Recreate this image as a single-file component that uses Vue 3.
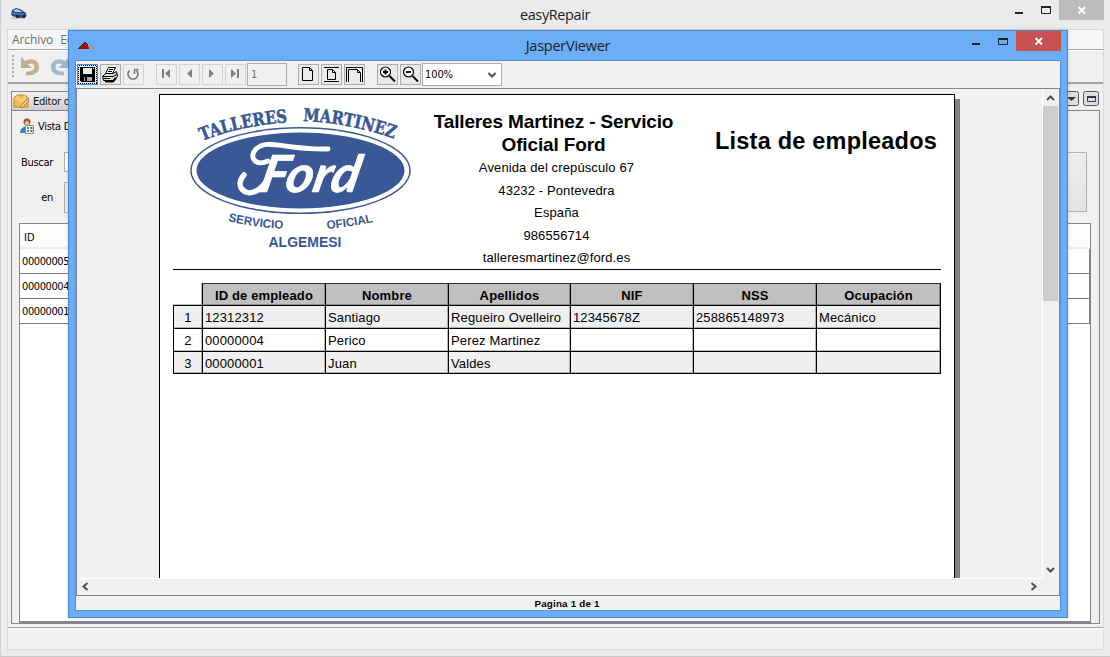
<script setup>
const columns = [
  { label: 'ID de empleado', key: 'id' },
  { label: 'Nombre', key: 'name' },
  { label: 'Apellidos', key: 'last' },
  { label: 'NIF', key: 'nif' },
  { label: 'NSS', key: 'nss' },
  { label: 'Ocupación', key: 'job' },
]
const employees = [
  { id: '12312312', name: 'Santiago', last: 'Regueiro Ovelleiro', nif: '12345678Z', nss: '258865148973', job: 'Mecánico' },
  { id: '00000004', name: 'Perico', last: 'Perez Martinez', nif: '', nss: '', job: '' },
  { id: '00000001', name: 'Juan', last: 'Valdes', nif: '', nss: '', job: '' },
]
const ids = ['00000005', '00000004', '00000001']
</script>

<template>
  <div class="desktop">
    <div class="main-title">
      <svg class="car" width="18" height="14" viewBox="0 0 18 14">
        <path d="M1 7 L2 3 L6 1 L10 2 L13 4 L16 6 L16.500 9 L14 11 L9 11 L2 9Z" fill="#284f8c" />
        <path d="M3 4 L6 2 L9.500 3 L12 5 L6 5Z" fill="#b4c8e2" />
        <path d="M2 6 L7 7 L14 7" stroke="#5f8cc8" fill="none" />
        <circle cx="7.500" cy="9.500" r="1.700" fill="#1c1c24" /><circle cx="14" cy="9.500" r="1.500" fill="#1c1c24" />
        <path d="M2 11 H15" stroke="#777" opacity=".6" />
      </svg>
      <span class="title-text">easyRepair</span>
      <svg class="win-controls" width="95" height="20" viewBox="0 0 95 20">
        <path d="M50 0H95V20H50Z" fill="#bcbcbc" />
        <path d="M6 13H14" stroke="#222" stroke-width="2" />
        <path d="M32.500 6.500H41.500V13.500H32.500Z" stroke="#222" fill="none" /><path d="M32 7H42" stroke="#222" stroke-width="2" />
        <path d="M69.500 7L76 13.500M76 7L69.500 13.500" stroke="#fff" stroke-width="1.800" />
      </svg>
    </div>
    <div class="main-frame">
      <div class="menu"><span>Archivo</span><span>Editar</span></div>
      <div class="main-tools">
        <i class="grip"></i>
        <svg width="60" height="24" viewBox="0 0 60 24">
          <path d="M3 3L7 7C13 3 21 6 21 13C21 19 16 22 8 21L8 17.500C13 18 16.500 16 16.500 13C16.500 9.500 13 8.500 10 10.500L14 14H3Z" fill="#c3ae94" />
          <path d="M51 3L47 7C41 3 33 6 33 13C33 19 38 22 46 21L46 17.500C41 18 37.500 16 37.500 13C37.500 9.500 41 8.500 44 10.500L40 14H51Z" fill="#a5b8c6" />
        </svg>
      </div>
      <div class="tab-row">
        <div class="tab">
          <svg width="17" height="15" viewBox="0 0 17 15">
            <path d="M1 4L4 1H12L15 4V13H1Z" fill="#f3ba52" stroke="#c98622" />
            <path d="M1 5H15M5 1L4 5L8 8L12 5L11 1" stroke="#fbe0a0" fill="none" />
            <path d="M7 13L14 5L16 7L9 14Z" fill="#f6d27b" stroke="#9a6424" stroke-width=".8" /><path d="M13 5L15 3L16.500 5L15 7Z" fill="#d98a94" />
          </svg>
          <span>Editor de empleados</span>
        </div>
        <div class="tab-buttons">
          <svg width="38" height="16" viewBox="0 0 38 16">
            <rect x="2.500" y=".5" width="15" height="14" rx="2" fill="#dedede" stroke="#50555d" />
            <path d="M6 6H15L10.500 10Z" fill="#303844" />
            <rect x="22.500" y=".5" width="15" height="14" rx="2" fill="#dedede" stroke="#50555d" />
            <path d="M26.500 5.500H34.500V10.500H26.500Z" fill="none" stroke="#303844" /><path d="M26 6H35" stroke="#303844" stroke-width="2" />
          </svg>
        </div>
      </div>
      <div class="panel">
        <div class="view-label">
          <svg width="15" height="17" viewBox="0 0 15 17">
            <circle cx="7" cy="4" r="3.500" fill="#8a5a2b" /><circle cx="7" cy="5.300" r="2.300" fill="#e9b98c" />
            <path d="M0 15C0 11 3 8.500 6 8.500L9 15Z" fill="#2f86c8" />
            <path d="M5.500 7.500H13.500V15.500H5.500Z" fill="#f7f7f7" stroke="#8292a2" />
            <path d="M7 10H9M7 13H9" stroke="#4d9c38" stroke-width="1.800" /><path d="M10.500 10H12.500M10.500 13H12.500" stroke="#4a6488" stroke-width="1.800" />
          </svg>
          <span>Vista Detalle</span>
        </div>
        <div class="search">
          <div class="line"><label>Buscar</label><i class="field"></i></div>
          <div class="line tall"><label>en</label><i class="combo"></i></div>
          <div class="big-button"></div>
        </div>
        <div class="id-table">
          <div class="id-head">ID</div>
          <div v-for="id in ids" :key="id" class="id-row">{{ id }}</div>
        </div>
      </div>
      <div class="main-status"></div>
    </div>

    <section class="jasper">
      <div class="jasper-title">
        <svg class="mountain" width="17" height="9" viewBox="0 0 17 9" shape-rendering="crispEdges">
          <path d="M8 8L12 2L17 8Z" fill="#999" /><path d="M0 8L7 1L10 4L11 8Z" fill="#b00808" />
          <path d="M0 8L7 1L10 4" stroke="#222" fill="none" />
        </svg>
        <span class="title-text">JasperViewer</span>
        <svg class="jwin" width="95" height="21" viewBox="0 0 95 21">
          <path d="M44 0H89V20H44Z" fill="#c75050" />
          <path d="M0 13H8" stroke="#222" stroke-width="2" />
          <path d="M26.500 7.500H35.500V13.500H26.500Z" stroke="#222" fill="none" /><path d="M26 8H36" stroke="#222" stroke-width="2" />
          <path d="M63.500 7L70 13.500M70 7L63.500 13.500" stroke="#fff" stroke-width="1.800" />
        </svg>
      </div>
      <div class="client">
        <div class="tools">
          <b class="tb focus"><svg width="19" height="19" viewBox="0 0 19 19" shape-rendering="crispEdges">
            <path d="M2 2H17V17H3L2 16Z" /><path d="M5 3H14V9H5Z" fill="#eee" /><path d="M6 12H14V16H6Z" fill="#aaa" /><path d="M7 12H9V16H7Z" fill="#000" /><path d="M15 3H16V4H15Z" fill="#fff" />
            <path d="M.5 .5H18.500V18.500H.5Z" fill="none" stroke="#000" stroke-dasharray="1 1" />
          </svg></b>
          <b class="tb on"><svg width="19" height="19" viewBox="0 0 19 19">
            <path d="M4.500 8.500L7.500 2.500H14.500L11.500 8.500" fill="#fff" stroke="#000" /><path d="M8 4.500H12M7 6.500H11" stroke="#000" />
            <path d="M1.500 11.500L4.500 8.500H12L15.500 6.500L16.500 11.500L12.500 15.500H2.500Z" fill="#ddd" stroke="#000" /><path d="M2 11.500H12L16 9.500M2.500 13.500H12" stroke="#000" fill="none" /><path d="M9 13.500H12" stroke="#dfda38" /><path d="M4 16.500H12L15 13" stroke="#000" stroke-width="2" fill="none" />
          </svg></b>
          <b class="tb"><svg width="19" height="19" viewBox="0 0 19 19"><path d="M5.500 5.500A5 5 0 1 0 12.500 5.500" stroke="#808080" stroke-width="1.800" fill="none" /><path d="M14.500 4.500H10.500V9" stroke="#808080" stroke-width="1.600" fill="none" /></svg></b>
          <b class="tb g12"><svg width="19" height="19" viewBox="0 0 19 19" fill="#808080"><path d="M5 4H7V13H5ZM13 4V13L8 8.500Z" /></svg></b>
          <b class="tb"><svg width="19" height="19" viewBox="0 0 19 19" fill="#808080"><path d="M12 4V13L7 8.500Z" /></svg></b>
          <b class="tb"><svg width="19" height="19" viewBox="0 0 19 19" fill="#808080"><path d="M6 4V13L11 8.500Z" /></svg></b>
          <b class="tb"><svg width="19" height="19" viewBox="0 0 19 19" fill="#808080"><path d="M11 4H13V13H11ZM5 4V13L10 8.500Z" /></svg></b>
          <span class="page-no">1</span>
          <b class="tb on g11"><svg width="19" height="19" viewBox="0 0 19 19" fill="none" stroke="#000"><path d="M3.500 2.500H10.500L13.500 5.500V15.500H3.500Z" /><path d="M10.500 2.500V5.500H13.500" /></svg></b>
          <b class="tb on"><svg width="19" height="19" viewBox="0 0 19 19" fill="none" stroke="#000"><path d="M2 2.500H17M2 16.500H17" /><path d="M5.500 4.500H10.500L13.500 7.500V14.500H5.500Z" /><path d="M10.500 4.500V7.500H13.500" /></svg></b>
          <b class="tb on"><svg width="19" height="19" viewBox="0 0 19 19" fill="none" stroke="#000"><path d="M1.500 17V2.500H17.500V17" /><path d="M3.500 17V4.500H12.500L15.500 7.500V17" /><path d="M12.500 4.500V7.500H15" /></svg></b>
          <b class="tb on g12"><svg width="19" height="19" viewBox="0 0 19 19" fill="none" stroke="#000"><circle cx="7.500" cy="7" r="5" fill="#fff" stroke-width="1.200" /><path d="M5 7H10M7.500 4.500V9.500" stroke-width="1.800" /><path d="M11.500 11L17 16.500" stroke-width="2" /></svg></b>
          <b class="tb on"><svg width="19" height="19" viewBox="0 0 19 19" fill="none" stroke="#000"><circle cx="7.500" cy="7" r="5" fill="#fff" stroke-width="1.200" /><path d="M5 7H10" stroke-width="1.800" /><path d="M11.500 11L17 16.500" stroke-width="2" /></svg></b>
          <div class="zoom">100%<svg width="8" height="6" viewBox="0 0 8 6"><path d="M.5 1L4 4.500L7.500 1" stroke="#505050" stroke-width="2" fill="none" /></svg></div>
        </div>
        <div class="scroll">
          <div class="viewport">
            <article class="paper">
              <header>
                <svg class="logo" width="240" height="165" viewBox="0 0 240 165" fill="#3a5896">
                  <defs>
                    <path id="arcA" d="M22 46Q62 30 112 27" /><path id="arcB" d="M123 26Q170 28 215 44" />
                    <path id="arcC" d="M48 126Q76 133 108 134" /><path id="arcD" d="M147 134Q172 132 197 126" />
                  </defs>
                  <g class="stencil">
                    <text><textPath href="#arcA" textLength="88" lengthAdjust="spacingAndGlyphs">TALLERES</textPath></text>
                    <text><textPath href="#arcB" textLength="93" lengthAdjust="spacingAndGlyphs">MARTINEZ</textPath></text>
                  </g>
                  <ellipse cx="120.500" cy="75.500" rx="110.300" ry="43.500" />
                  <ellipse cx="120.500" cy="75.500" rx="108.800" ry="42" fill="#fff" />
                  <ellipse cx="120.500" cy="75.500" rx="104" ry="38" />
                  <text class="script" transform="translate(78 97) skewX(-12)" textLength="99" lengthAdjust="spacingAndGlyphs">Ford</text>
                  <path d="M88 66C76 72 68 62 76 54C88 43 103 55 148 54" fill="none" stroke="#fff" stroke-width="5" stroke-linecap="round" />
                  <path d="M64 80C54 91 65 102 76 96C81 94 85 89 88 83" fill="none" stroke="#fff" stroke-width="5.500" stroke-linecap="round" />
                  <g class="plain">
                    <text><textPath href="#arcC" textLength="56" lengthAdjust="spacingAndGlyphs">SERVICIO</textPath></text>
                    <text><textPath href="#arcD" textLength="47" lengthAdjust="spacingAndGlyphs">OFICIAL</textPath></text>
                    <text class="town" x="88.500" y="152" textLength="73" lengthAdjust="spacingAndGlyphs">ALGEMESI</text>
                  </g>
                </svg>
                <div class="company">
                  <h1>Talleres Martinez - Servicio<br>Oficial Ford</h1>
                  <p>Avenida del crepúsculo 67</p>
                  <p>43232 - Pontevedra</p>
                  <p>España</p>
                  <p>986556714</p>
                  <p>talleresmartinez@ford.es</p>
                </div>
                <h2>Lista de empleados</h2>
              </header>
              <div class="grid">
                <div class="row head"><span class="num"></span><span v-for="c in columns" :key="c.key">{{ c.label }}</span></div>
                <div v-for="(e, i) in employees" :key="e.id" class="row" :class="{ odd: i % 2 === 0 }">
                  <span class="num">{{ i + 1 }}</span><span v-for="c in columns" :key="c.key">{{ e[c.key] }}</span>
                </div>
              </div>
            </article>
          </div>
          <div class="vbar">
            <svg width="15" height="17" viewBox="0 0 15 17"><path d="M4 11L7.500 7.500L11 11" stroke="#505050" stroke-width="2" fill="none" /></svg>
            <i></i>
            <svg class="down" width="15" height="17" viewBox="0 0 15 17"><path d="M4 6L7.500 9.500L11 6" stroke="#505050" stroke-width="2" fill="none" /></svg>
          </div>
          <div class="hbar">
            <svg width="17" height="16" viewBox="0 0 17 16"><path d="M10.500 4L6.500 7.500L10.500 11" stroke="#505050" stroke-width="2" fill="none" /></svg>
            <svg width="17" height="16" viewBox="0 0 17 16"><path d="M6.500 4L10.500 7.500L6.500 11" stroke="#505050" stroke-width="2" fill="none" /></svg>
          </div>
        </div>
        <footer>Pagina 1 de 1</footer>
      </div>
    </section>
  </div>
</template>

<style>
body { margin: 0; overflow: hidden; }
</style>
<style scoped>
* { box-sizing: border-box; }
svg { display: block; flex: none; }
.desktop { position: relative; width: 1110px; height: 657px; background: #ebebeb; border-left: 1px solid #cfcfcf; border-bottom: 1px solid #c8c8c8; overflow: hidden; font: 11px "DejaVu Sans Condensed", "DejaVu Sans", sans-serif; padding: 0 6px; }
.main-title { height: 29px; display: grid; grid-template-columns: 95px 1fr 95px; margin-right: 1px; }
.car { margin: 7px 0 0 3px; }
.title-text { font: 14.5px/30px "Open Sans", sans-serif; letter-spacing: -.38px; color: #222; text-align: center; }
.win-controls { margin-left: 1px; }
.main-frame { width: 1097px; height: 621px; border: 1px solid #d9d9d9; background: #f0f0f0; display: flex; flex-direction: column; }
.menu { height: 20px; flex: none; background: #f5f6f7; border-bottom: 1px solid #a0a0a0; font: 12px/20px "Open Sans", sans-serif; color: #6d6d6d; padding-left: 4px; display: flex; gap: 7px; letter-spacing: -.1px; }
.main-tools { height: 34px; flex: none; border-bottom: 2px solid #a5a5a5; display: flex; align-items: center; padding-left: 4px; border-top: 1px solid #fff; }
.main-tools svg { margin-left: 4px; margin-top: -2px; }
.grip { width: 2px; height: 23px; background: repeating-linear-gradient(#aaa 0 2px, #f0f0f0 2px 4px); }
.tab-row { display: flex; justify-content: space-between; height: 19px; margin: 7px 4px 0 3px; flex: none; }
.tab { width: 160px; border: 1px solid #828790; border-bottom: 0; background: linear-gradient(#f2f2f2, #cfcfcf); display: flex; align-items: center; gap: 3px; padding-left: 1px; color: #111; white-space: nowrap; overflow: hidden; letter-spacing: -.25px; }
.panel { margin: 0 3px; height: 514px; border: 1px solid #828790; padding: 6px 8px 0 7px; flex: none; }
.view-label { display: flex; align-items: center; gap: 3px; height: 18px; margin-left: 1px; letter-spacing: -.3px; }
.search { height: 88px; margin-top: 17px; display: grid; grid-template-columns: 1fr 100px; grid-template-rows: 20px 31px; row-gap: 10px; padding-right: 4px; }
.line { display: flex; align-items: center; gap: 11px; grid-column: 1; }
.line label { width: 34px; text-align: right; letter-spacing: -.3px; }
.line i { width: 180px; height: 100%; border: 1px solid #abadb3; background: #fff; }
.line .combo { background: #eee; }
.big-button { grid-column: 2; grid-row: 1 / 3; height: 60px; border: 1px solid #adb2b5; background: linear-gradient(#eee, #e3e3e3); }
.id-table { height: 400px; margin-top: -17px; border: 1px solid #828790; border-bottom-width: 2px; background: #fff; }
.id-head { height: 25px; background: #fcfcfc; border-bottom: 2px solid #e8eef8; line-height: 27px; padding-left: 4px; }
.id-row { height: 25px; border-bottom: 1px solid #808080; border-right: 1px solid #808080; line-height: 25px; padding-left: 2px; letter-spacing: -.4px; }
.main-status { margin-top: 3px; border-top: 1px solid #a0a0a0; box-shadow: inset 0 1px #fff; flex: 1; }

.jasper { position: absolute; left: 67px; top: 30px; width: 1000px; height: 588px; background: #6badf6; border: 1px solid #4c84c2; box-shadow: 0 0 4px #0002; padding: 0 6px 6px; }
.jasper-title { height: 29px; display: grid; grid-template-columns: 95px 1fr 95px; }
.jasper-title .title-text { letter-spacing: -.25px; }
.mountain { margin: 10px 0 0 3px; }
.jwin { margin-left: 6px; }
.client { border: 1px solid #5793d4; height: 551px; background: #f0f0f0; display: flex; flex-direction: column; }
.tools { height: 27px; flex: none; display: flex; align-items: center; gap: 2px; padding-left: 1px; }
.tb { width: 21px; height: 21px; border: 1px solid #d3d3d3; background: #f0f0f0; flex: none; }
.tb.on { border-color: #adadad; background: #ebebeb; }
.tb.focus { border-color: #2f94ee; background: #dcebfb; }
.g12 { margin-left: 10px; }
.g11 { margin-left: 9px; }
.page-no { width: 40px; height: 23px; border: 1px solid #abadb3; padding-left: 3px; line-height: 21px; color: #7a6a50; margin-left: -1px; }
.zoom { width: 80px; height: 23px; border: 1px solid #abadb3; background: #fff; display: flex; align-items: center; justify-content: space-between; padding: 0 5px 0 2px; margin-left: -1px; letter-spacing: -.1px; }
.scroll { height: 508px; flex: none; border: 1px solid #828790; display: grid; grid-template-columns: 965px 17px; grid-template-rows: 490px 16px; }
.viewport { overflow: hidden; border-bottom: 1px solid #fff; padding: 5px 0 0 82px; }
.paper { width: 796px; height: 1120px; background: #fff; border: 1px solid #000; box-shadow: 5px 5px #808080; color: #000; font-family: "Liberation Sans", Arial, sans-serif; }
header { display: grid; grid-template-columns: 253px 280px 247px; margin-left: 13px; width: 768px; height: 175px; border-bottom: 1px solid #000; }
.logo { margin-left: 7px; }
.stencil { font: bold 18px "DejaVu Serif Condensed", "DejaVu Serif", serif; stroke: #3a5896; stroke-width: .5px; }
.plain { font: bold 12px "Liberation Sans", sans-serif; }
.plain .town { font-size: 14.5px; }
.script { font: italic bold 51px Lato, sans-serif; fill: #fff; stroke: #fff; stroke-width: .6px; }
.company { text-align: center; margin-left: -10px; margin-right: 10px; padding-top: 15px; }
h1 { margin: 0 0 1px; font: bold 19px/23px "Liberation Sans", sans-serif; white-space: nowrap; letter-spacing: -.14px; }
h1 { padding-right: 5px; }
.company p { margin: 0; padding-left: 1px; font-size: 13px; line-height: 22.6px; letter-spacing: .12px; }
h2 { margin: 33px 0 0; font: bold 23.5px/27px "Liberation Sans", sans-serif; letter-spacing: .22px; white-space: nowrap; padding-left: 9px; }
.grid { margin: 13px 0 0 13px; width: 768px; }
.row { display: grid; grid-template-columns: 30px 123px 123px 122px 123px 123px 124px; grid-template-rows: 100%; height: 23px; font-size: 13px; line-height: 24px; }
.row:last-child { height: 22px; }
.row span { border-right: 1px solid #000; border-bottom: 1px solid #000; padding-left: 2px; letter-spacing: .14px; white-space: nowrap; box-shadow: inset -1px -1px #0004; }
.row .num { text-align: center; border-left: 1px solid #000; padding: 0; }
.odd { background: #efefef; }
.row.head span { background: #c0c0c0; font-weight: bold; text-align: center; border-top: 1px solid #333; padding: 0; }
.row.head .num { background: #fff; border-top: 0; border-left: 0; }
.vbar { border-left: 1px solid #fff; display: flex; flex-direction: column; }
.vbar i { height: 195px; width: 15px; background: #cdcdcd; }
.vbar .down { margin-top: auto; }
.hbar { display: flex; justify-content: space-between; width: 965px; }
footer { font: bold 9.8px/15px "Liberation Sans", sans-serif; text-align: center; letter-spacing: .2px; padding-right: 2px; }
</style>
